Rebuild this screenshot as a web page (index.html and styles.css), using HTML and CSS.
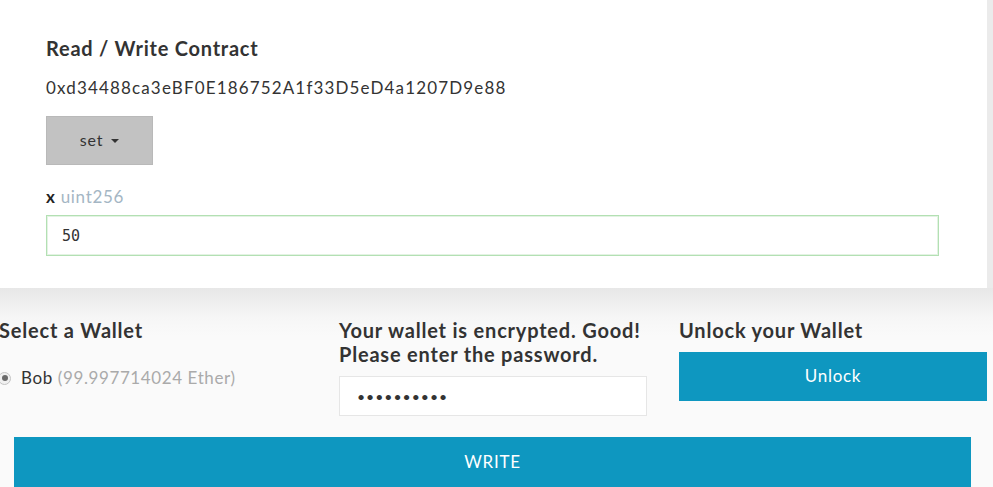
FILE: index.html
```html
<!DOCTYPE html>
<html>
<head>
<meta charset="utf-8">
<link rel="stylesheet" href="styles.css">
</head>
<body>
<div class="card">
  <h2 class="title">Read / Write Contract</h2>
  <div class="address">0xd34488ca3eBF0E186752A1f33D5eD4a1207D9e88</div>
  <button class="set-btn">set <span class="caret"></span></button>
  <div class="param"><b>x</b> <span class="ptype">uint256</span></div>
  <input class="param-input" type="text" value="50">
</div>
<div class="wallet">
  <div class="cols">
    <div class="col">
      <h3 class="col-title">Select a Wallet</h3>
      <label class="wallet-opt"><span class="radio"><span class="radio-dot"></span></span><span class="name">Bob</span> <span class="bal">(99.997714024 Ether)</span></label>
    </div>
    <div class="col">
      <h3 class="col-title">Your wallet is encrypted. Good! Please enter the password.</h3>
      <input class="pw" type="password" value="0123456789">
    </div>
    <div class="col">
      <h3 class="col-title">Unlock your Wallet</h3>
      <button class="unlock">Unlock</button>
    </div>
  </div>
  <button class="write">WRITE</button>
</div>
</body>
</html>
```
FILE: styles.css
```css
html, body {
  margin: 0;
  padding: 0;
}
body {
  background: #ebebeb;
  font-family: Lato, "Open Sans", sans-serif;
  color: #333;
  width: 993px;
  height: 487px;
  overflow: hidden;
}
.card {
  background: #fff;
  width: 987px;
  height: 288px;
  box-sizing: border-box;
  padding: 36px 46px 0;
}
.title {
  margin: 0;
  font-size: 20px;
  line-height: 24px;
  font-weight: 700;
  letter-spacing: 0.76px;
}
.address {
  margin-top: 16px;
  font-size: 17px;
  line-height: 24px;
  letter-spacing: 1.15px;
}
.set-btn {
  margin-top: 16px;
  display: flex;
  align-items: center;
  justify-content: center;
  gap: 8px;
  width: 107px;
  height: 49px;
  background: #c2c2c2;
  border: 1px solid #b9b9b9;
  font-family: Lato, sans-serif;
  font-size: 16px;
  color: #333;
  padding: 0 0 2px;
  letter-spacing: 0.8px;
}
.caret {
  width: 0;
  height: 0;
  border-left: 4px solid transparent;
  border-right: 4px solid transparent;
  border-top: 4px solid #333;
  margin-top: 2px;
}
.param {
  margin-top: 20px;
  font-size: 17px;
  line-height: 24px;
  letter-spacing: 0.7px;
}
.param b {
  color: #222;
}
.ptype {
  color: #a4b6c4;
}
.param-input {
  display: block;
  margin-top: 6px;
  width: 893px;
  height: 41px;
  box-sizing: border-box;
  border: 1px solid #b3e0b3;
  box-shadow: inset 0 0 0 1px #e3f3e3;
  padding: 0 15px;
  font-family: "DejaVu Sans Mono", monospace;
  font-size: 15px;
  color: #333;
  outline: none;
}
.wallet {
  background: linear-gradient(#e7e7e7 0px, #f6f6f6 30px, #fafafa 48px);
  height: 199px;
  padding-top: 30px;
  box-sizing: border-box;
}
.cols {
  display: grid;
  grid-template-columns: 308px 308px 308px;
  column-gap: 32px;
  margin-left: -1px;
  height: 119px;
}
.col-title {
  margin: 0;
  font-size: 20px;
  line-height: 24px;
  font-weight: 700;
  letter-spacing: 0.8px;
}
.wallet-opt {
  display: flex;
  align-items: center;
  margin-top: 24px;
  font-size: 17px;
  line-height: 24px;
  letter-spacing: 0.6px;
}
.radio {
  width: 11px;
  height: 11px;
  border-radius: 50%;
  border: 1px solid #c4c4c4;
  background: #f0f0f0;
  display: flex;
  align-items: center;
  justify-content: center;
  margin-left: -1px;
  margin-right: 10px;
}
.radio-dot {
  width: 6px;
  height: 6px;
  border-radius: 50%;
  background: #6a6a6a;
}
.name {
  margin-right: 5px;
}
.bal {
  color: #aaa;
}
.pw {
  display: block;
  margin-top: 10px;
  width: 308px;
  height: 40px;
  box-sizing: border-box;
  border: 1px solid #e6e6e6;
  background: #fff;
  padding: 0 17px;
  font-family: Lato, sans-serif;
  font-size: 14px;
  color: #333;
  outline: none;
  letter-spacing: 1px;
}
.unlock {
  display: block;
  margin-top: 10px;
  width: 308px;
  height: 49px;
  background: #0e97c0;
  border: none;
  color: #fff;
  font-family: Lato, sans-serif;
  font-size: 17px;
  letter-spacing: 0.7px;
  padding: 0 0 2px;
}
.write {
  display: block;
  margin: 0 0 0 14px;
  width: 957px;
  height: 56px;
  background: #0e97c0;
  border: none;
  color: #fff;
  font-family: Lato, sans-serif;
  font-size: 17px;
  letter-spacing: 0.7px;
  padding: 0 0 8px;
}
```
